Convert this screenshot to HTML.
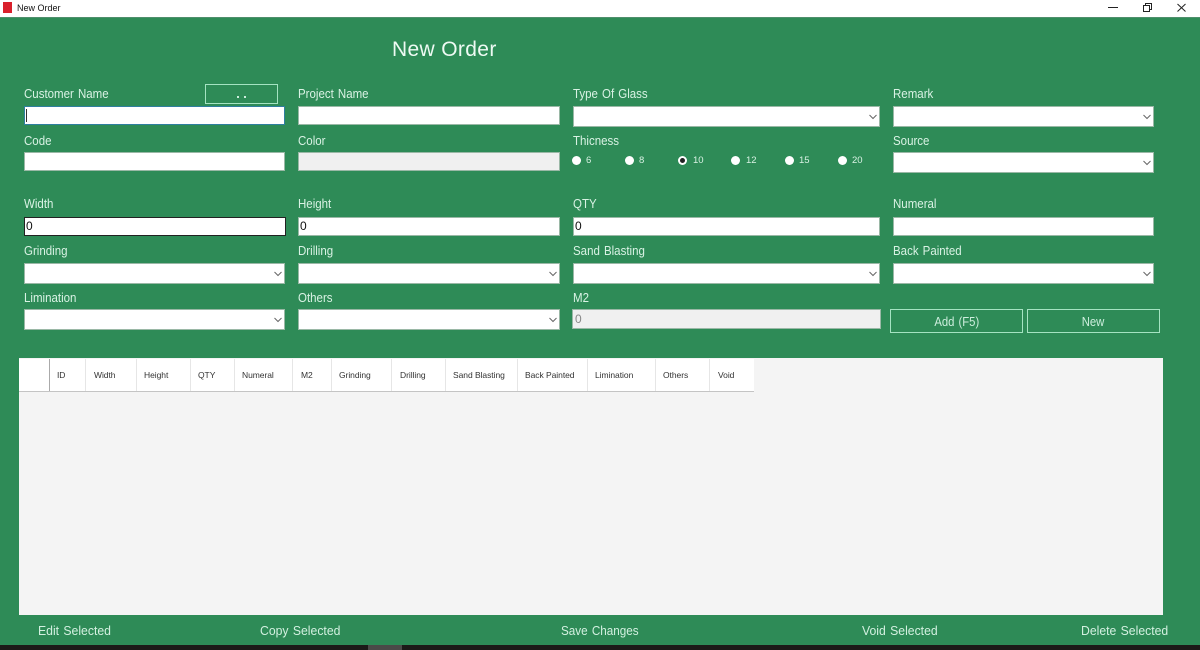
<!DOCTYPE html>
<html><head><meta charset="utf-8"><title>New Order</title>
<style>
html,body{margin:0;padding:0;width:1200px;height:650px;overflow:hidden;background:#2e8b57;font-family:"Liberation Sans",sans-serif}
div,span{position:absolute;box-sizing:border-box}
.l{color:#d9f2e4;font-size:13px;word-spacing:1px;line-height:16px;white-space:nowrap;margin-top:.5px;transform:scaleX(.885);transform-origin:left top}
.f{transform:scaleX(.94);color:#d3f0e0}
.i{background:#fff;border:1px solid #9ab8a6;height:19px}
.c{background:#fff;border:1px solid #9ab8a6;height:21px}
.c svg{position:absolute;right:2px;top:7px}
.v{color:#111;font-size:12px;line-height:17px;left:1px;top:0}
.r{width:9px;height:9px;border-radius:50%;background:#fff;top:156px}
.t{color:#d9f2e4;font-size:9.500px;line-height:12px;top:155px}
.b{border:1px solid #a5e3c2;color:#cdeedd;font-size:13px;word-spacing:1px;text-align:center}
.b i{font-style:normal;display:inline-block;transform:scaleX(.87)}
.h{top:359px;height:32px;border-right:1px solid #e6e6e6;font-size:8.500px;letter-spacing:-.05px;color:#333;line-height:32px;padding-left:7px;white-space:nowrap}
</style></head><body>
<div style="left:0;top:0;width:1200px;height:18px;background:#fff;border-bottom:1px solid #4f8f6c"></div>
<div style="left:3px;top:2px;width:9px;height:11px;background:#d9202c"></div>
<div style="left:17px;top:2px;font-size:9px;line-height:13px;color:#111;white-space:nowrap">New Order</div>
<svg style="position:absolute;left:1100px;top:0" width="100" height="17" fill="none" stroke="#222" stroke-width="1"><path d="M8 7.500h10"/><path d="M43.500 5.500h6v6h-6zM45.500 5.500v-2h6v6h-2"/><path d="M77.500 4l8 7.500M85.500 4l-8 7.500"/></svg>

<div style="left:392px;top:36px;font-size:21px;line-height:28px;color:#eefaf3;letter-spacing:.35px;white-space:nowrap">New Order</div>

<div class="l" style="left:24px;top:85px">Customer Name</div>
<div class="b" style="left:205px;top:84px;width:73px;height:20px"></div>
<div style="left:237px;top:96px;width:2px;height:2px;background:#cdeedd"></div>
<div style="left:244px;top:96px;width:2px;height:2px;background:#cdeedd"></div>
<div class="l" style="left:298px;top:85px">Project Name</div>
<div class="l" style="left:573px;top:85px">Type Of Glass</div>
<div class="l" style="left:893px;top:85px">Remark</div>
<div class="i" style="left:24px;top:106px;width:261px;border-color:#2f7f9f"><div style="left:1px;top:2px;width:1px;height:13px;background:#333"></div></div>
<div class="i" style="left:298px;top:106px;width:262px"></div>
<div class="c" style="left:573px;top:106px;width:307px"><svg width="8" height="6" fill="none" stroke="#666"><path d="M.5 1l3.500 3.500L7.500 1"/></svg></div>
<div class="c" style="left:893px;top:106px;width:261px"><svg width="8" height="6" fill="none" stroke="#666"><path d="M.5 1l3.500 3.500L7.500 1"/></svg></div>

<div class="l" style="left:24px;top:132px">Code</div>
<div class="l" style="left:298px;top:132px">Color</div>
<div class="l" style="left:573px;top:132px">Thicness</div>
<div class="l" style="left:893px;top:132px">Source</div>
<div class="i" style="left:24px;top:152px;width:261px"></div>
<div class="i" style="left:298px;top:152px;width:262px;background:#f0f0f0"></div>
<div class="c" style="left:893px;top:152px;width:261px"><svg width="8" height="6" fill="none" stroke="#666"><path d="M.5 1l3.500 3.500L7.500 1"/></svg></div>

<div class="r" style="left:572px"></div><div class="t" style="left:586px">6</div>
<div class="r" style="left:625px"></div><div class="t" style="left:639px">8</div>
<div class="r" style="left:678px"></div><div style="left:680px;top:158px;width:5px;height:5px;border-radius:50%;background:#222"></div><div class="t" style="left:693px">10</div>
<div class="r" style="left:731px"></div><div class="t" style="left:746px">12</div>
<div class="r" style="left:785px"></div><div class="t" style="left:799px">15</div>
<div class="r" style="left:838px"></div><div class="t" style="left:852px">20</div>

<div class="l" style="left:24px;top:195px">Width</div>
<div class="l" style="left:298px;top:195px">Height</div>
<div class="l" style="left:573px;top:195px">QTY</div>
<div class="l" style="left:893px;top:195px">Numeral</div>
<div class="i" style="left:24px;top:217px;width:262px;border-color:#222"><div class="v">0</div></div>
<div class="i" style="left:298px;top:217px;width:262px"><div class="v">0</div></div>
<div class="i" style="left:573px;top:217px;width:307px"><div class="v">0</div></div>
<div class="i" style="left:893px;top:217px;width:261px"></div>

<div class="l" style="left:24px;top:242px">Grinding</div>
<div class="l" style="left:298px;top:242px">Drilling</div>
<div class="l" style="left:573px;top:242px">Sand Blasting</div>
<div class="l" style="left:893px;top:242px">Back Painted</div>
<div class="c" style="left:24px;top:263px;width:261px"><svg width="8" height="6" fill="none" stroke="#666"><path d="M.5 1l3.500 3.500L7.500 1"/></svg></div>
<div class="c" style="left:298px;top:263px;width:262px"><svg width="8" height="6" fill="none" stroke="#666"><path d="M.5 1l3.500 3.500L7.500 1"/></svg></div>
<div class="c" style="left:573px;top:263px;width:307px"><svg width="8" height="6" fill="none" stroke="#666"><path d="M.5 1l3.500 3.500L7.500 1"/></svg></div>
<div class="c" style="left:893px;top:263px;width:261px"><svg width="8" height="6" fill="none" stroke="#666"><path d="M.5 1l3.500 3.500L7.500 1"/></svg></div>

<div class="l" style="left:24px;top:289px">Limination</div>
<div class="l" style="left:298px;top:289px">Others</div>
<div class="l" style="left:573px;top:289px">M2</div>
<div class="c" style="left:24px;top:309px;width:261px"><svg width="8" height="6" fill="none" stroke="#666"><path d="M.5 1l3.500 3.500L7.500 1"/></svg></div>
<div class="c" style="left:298px;top:309px;width:262px"><svg width="8" height="6" fill="none" stroke="#666"><path d="M.5 1l3.500 3.500L7.500 1"/></svg></div>
<div class="i" style="left:572px;top:309px;width:309px;height:20px;background:#f0f0f0"><div class="v" style="color:#888;left:2px;top:1px">0</div></div>
<div class="b" style="left:890px;top:309px;width:133px;height:24px;line-height:23px"><i>Add (F5)</i></div>
<div class="b" style="left:1027px;top:309px;width:133px;height:24px;line-height:23px"><i>New</i></div>

<div style="left:19px;top:358px;width:1144px;height:257px;background:#f4f4f4"></div>
<div style="left:19px;top:359px;width:735px;height:33px;background:#fff;border-bottom:1px solid #c4c4c4"></div>
<div class="h" style="left:19px;width:31px;border-right:1px solid #aaa"></div>
<div class="h" style="left:50px;width:36px">ID</div>
<div class="h" style="left:86px;width:51px;padding-left:8px">Width</div>
<div class="h" style="left:137px;width:54px">Height</div>
<div class="h" style="left:191px;width:44px">QTY</div>
<div class="h" style="left:235px;width:58px">Numeral</div>
<div class="h" style="left:293px;width:39px;padding-left:8px">M2</div>
<div class="h" style="left:332px;width:60px">Grinding</div>
<div class="h" style="left:392px;width:54px;padding-left:8px">Drilling</div>
<div class="h" style="left:446px;width:72px">Sand Blasting</div>
<div class="h" style="left:518px;width:70px">Back Painted</div>
<div class="h" style="left:588px;width:68px">Limination</div>
<div class="h" style="left:656px;width:54px">Others</div>
<div class="h" style="left:710px;width:44px;border-right:none;padding-left:8px">Void</div>

<div class="l f" style="left:38px;top:622px">Edit Selected</div>
<div class="l f" style="left:260px;top:622px">Copy Selected</div>
<div class="l f" style="left:561px;top:622px;transform:scaleX(.9)">Save Changes</div>
<div class="l f" style="left:862px;top:622px">Void Selected</div>
<div class="l f" style="left:1081px;top:622px">Delete Selected</div>

<div style="left:0;top:645px;width:1200px;height:5px;background:#1c1a18"></div>
<div style="left:368px;top:645px;width:34px;height:5px;background:#4a4a48"></div>
</body></html>
